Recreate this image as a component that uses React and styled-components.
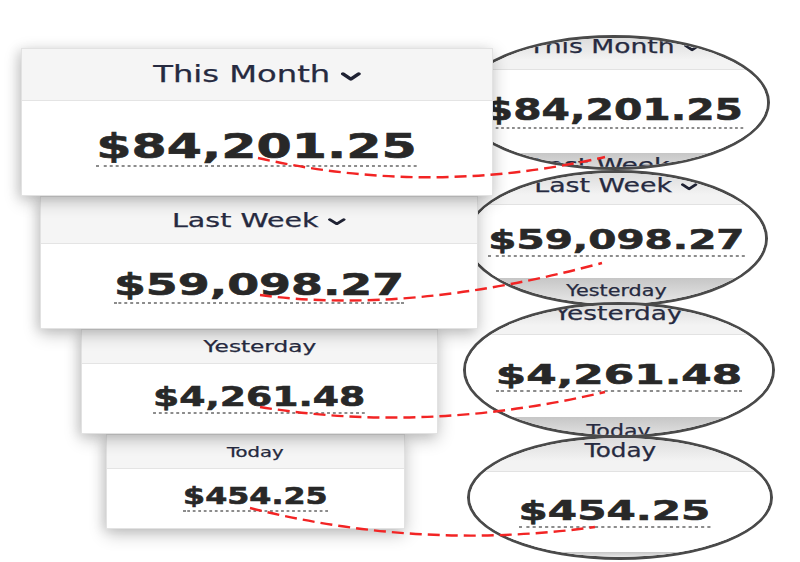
import styled, { createGlobalStyle } from 'styled-components';

const GlobalStyle = createGlobalStyle`
  html, body {
    margin: 0;
    padding: 0;
    background: #ffffff;
  }
  body {
    font-family: 'DejaVu Sans', Verdana, sans-serif;
  }
`;

const Page = styled.div`
  position: relative;
  width: 800px;
  height: 562px;
  overflow: hidden;
  display: flex;
  background: #ffffff;
`;

const LeftStack = styled.div`
  width: 516px;
  flex-shrink: 0;
  padding-top: 48px;
  display: flex;
  flex-direction: column;
  align-items: flex-start;
`;

const Card = styled.div`
  position: relative;
  z-index: ${(p) => p.$z};
  margin-left: ${(p) => p.$x}px;
  width: ${(p) => p.$w}px;
  box-sizing: border-box;
  border: 1px solid #e2e2e2;
  background: #ffffff;
  box-shadow: 0 5px 16px rgba(0, 0, 0, 0.24), -4px 2px 10px rgba(0, 0, 0, 0.08);
`;

const CardHeader = styled.div`
  height: ${(p) => p.$h}px;
  box-sizing: border-box;
  background: #f5f5f5;
  border-bottom: 1px solid #e4e4e4;
  display: flex;
  align-items: center;
  justify-content: center;
`;

const CardBody = styled.div`
  height: ${(p) => p.$h}px;
  display: flex;
  align-items: center;
  justify-content: center;
  background: #ffffff;
`;

const Label = styled.span`
  display: inline-flex;
  align-items: center;
  gap: 0.35em;
  font-size: ${(p) => p.$size}px;
  line-height: 1;
  color: #262a40;
  -webkit-text-stroke: 0.25px #262a40;
  white-space: nowrap;
  margin-top: ${(p) => p.$mt || 0}px;
  transform: scaleX(${(p) => p.$sx});
  transform-origin: center;
`;

const Amount = styled.span`
  display: inline-block;
  font-size: ${(p) => p.$size}px;
  font-weight: 700;
  line-height: 1;
  color: #282828;
  -webkit-text-stroke: 0.6px #282828;
  white-space: nowrap;
  padding-bottom: 2px;
  border-bottom: 2px dotted #8c8c8c;
  transform: scaleX(${(p) => p.$sx});
  transform-origin: center;
`;

const LensStack = styled.div`
  margin-left: -58px;
  padding-top: 35px;
  display: flex;
  flex-direction: column;
  align-items: flex-start;
`;

const Lens = styled.div`
  position: relative;
  margin-left: ${(p) => p.$x}px;
  margin-top: ${(p) => p.$mt}px;
  width: ${(p) => p.$w}px;
  height: ${(p) => p.$h}px;
  box-sizing: border-box;
  border: 3px solid #4a4a4a;
  border-radius: 50%;
  overflow: hidden;
  background: #ffffff;
  display: flex;
  flex-direction: column;
`;

const LensTop = styled.div`
  height: ${(p) => p.$h}px;
  flex-shrink: 0;
  box-sizing: border-box;
  background: linear-gradient(#dcdcdc, #f3f3f3 70%);
  border-bottom: 1px solid #e2e2e2;
  display: flex;
  align-items: flex-start;
  justify-content: center;
`;

const LensBody = styled.div`
  height: ${(p) => p.$h}px;
  flex-shrink: 0;
  display: flex;
  align-items: center;
  justify-content: center;
  padding-right: ${(p) => p.$shift || 0}px;
  box-sizing: border-box;
  background: #ffffff;
`;

const LensBottom = styled.div`
  flex: 1;
  background: linear-gradient(#c6c6c6, #e8e8e8);
  display: flex;
  align-items: flex-start;
  justify-content: center;
`;

const Connectors = styled.svg`
  position: absolute;
  left: 0;
  top: 0;
  z-index: 10;
  pointer-events: none;
`;

function Chevron() {
  return (
    <svg width="0.62em" height="0.4em" viewBox="0 0 12 7" style={{ marginTop: '0.15em' }}>
      <path d="M1.3 1.2 L6 5.6 L10.7 1.2" fill="none" stroke="#1f2233" strokeWidth="2.5" strokeLinecap="round" strokeLinejoin="round" />
    </svg>
  );
}

const cards = [
  { x: 21, w: 472, head: 52, body: 94, label: 'This Month', chev: true, ls: 23, lsx: 1.4, amount: '$84,201.25', as: 34, asx: 1.49 },
  { x: 40, w: 438, head: 47, body: 84, label: 'Last Week', chev: true, ls: 19, lsx: 1.5, amount: '$59,098.27', as: 31, asx: 1.48 },
  { x: 81, w: 357, head: 34, body: 69, label: 'Yesterday', ls: 16, lsx: 1.45, amount: '$4,261.48', as: 26, asx: 1.45 },
  { x: 106, w: 299, head: 34, body: 59, label: 'Today', ls: 14, lsx: 1.4, amount: '$454.25', as: 23, asx: 1.38 },
];

const lenses = [
  {
    x: 0, mt: 0, w: 312, h: 135, top: 32, body: 83,
    label: 'This Month', chev: true, ls: 19, lsx: 1.4, lmt: -1,
    amount: '$84,201.25', as: 30, asx: 1.36,
    next: 'Last Week', nchev: true, ns: 19, nsx: 1.4, nmt: 3,
  },
  {
    x: 7, mt: 0, w: 303, h: 137, top: 32, body: 73,
    label: 'Last Week', chev: true, ls: 19, lsx: 1.41, lmt: 3,
    amount: '$59,098.27', as: 27, asx: 1.5,
    next: 'Yesterday', ns: 15, nsx: 1.38, nmt: 6,
  },
  {
    x: 5, mt: -5, w: 312, h: 136, top: 30, body: 82,
    label: 'Yesterday', ls: 20, lsx: 1.32, lmt: -2,
    amount: '$4,261.48', as: 27, asx: 1.62,
    next: 'Today', ns: 17, nsx: 1.3, nmt: 6,
  },
  {
    x: 9, mt: -3, w: 306, h: 125, top: 34, body: 80, shift: 12,
    label: 'Today', ls: 19, lsx: 1.3, lmt: 3,
    amount: '$454.25', as: 27, asx: 1.56,
  },
];

const curves = [
  'M258 158 Q430 197 605 157',
  'M260 295 Q409 315 602 263',
  'M260 407 Q427 434 605 392',
  'M250 508 Q421 551 595 527',
];

export default function App() {
  return (
    <>
      <GlobalStyle />
      <Page>
        <LeftStack>
          {cards.map((c, i) => (
            <Card key={c.label} $x={c.x} $w={c.w} $z={10 - i}>
              <CardHeader $h={c.head}>
                <Label $size={c.ls} $sx={c.lsx}>
                  {c.label}
                  {c.chev && <Chevron />}
                </Label>
              </CardHeader>
              <CardBody $h={c.body}>
                <Amount $size={c.as} $sx={c.asx}>{c.amount}</Amount>
              </CardBody>
            </Card>
          ))}
        </LeftStack>

        <LensStack>
          {lenses.map((l) => (
            <Lens key={l.label} $x={l.x} $mt={l.mt} $w={l.w} $h={l.h}>
              <LensTop $h={l.top}>
                <Label $size={l.ls} $sx={l.lsx} $mt={l.lmt}>
                  {l.label}
                  {l.chev && <Chevron />}
                </Label>
              </LensTop>
              <LensBody $h={l.body} $shift={l.shift}>
                <Amount $size={l.as} $sx={l.asx}>{l.amount}</Amount>
              </LensBody>
              <LensBottom>
                {l.next && (
                  <Label $size={l.ns} $sx={l.nsx} $mt={l.nmt}>
                    {l.next}
                    {l.nchev && <Chevron />}
                  </Label>
                )}
              </LensBottom>
            </Lens>
          ))}
        </LensStack>

        <Connectors width="800" height="562" viewBox="0 0 800 562">
          {curves.map((d) => (
            <path key={d} d={d} fill="none" stroke="#f22424" strokeWidth="2.4" strokeDasharray="12 6" />
          ))}
        </Connectors>
      </Page>
    </>
  );
}
